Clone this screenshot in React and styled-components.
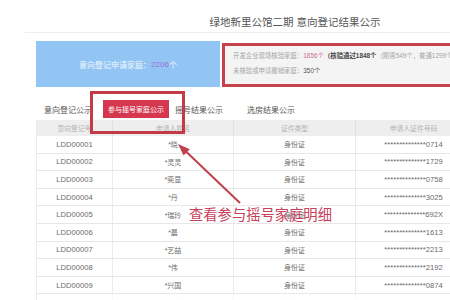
import React from "react";
import styled, { createGlobalStyle } from "styled-components";

const Global = createGlobalStyle`
  html, body { margin: 0; padding: 0; background: #fff; }
  body {
    width: 450px; height: 300px; overflow: hidden;
    font-family: "Liberation Sans", "Noto Sans CJK SC", sans-serif;
  }
`;

const Page = styled.div`
  position: relative;
  width: 450px;
  height: 300px;
  overflow: hidden;
  background: #fff;
`;

const Container = styled.div`
  margin-left: 25px;
  width: 560px;
`;

const Title = styled.h1`
  margin: 0;
  padding: 16px 0 4px;
  font-size: 10.5px;
  line-height: 12px;
  font-weight: normal;
  color: #555;
  text-align: center;
  border-bottom: 1px solid #ededed;
  width: 540px;
`;

const Summary = styled.div`
  display: flex;
  align-items: flex-start;
  gap: 2px;
  margin-top: 8px;
  padding-left: 11px;
`;

const BlueBox = styled.div`
  width: 184px;
  height: 46px;
  background: #92c5f4;
  display: flex;
  align-items: center;
  justify-content: center;
  color: #f4f8ff;
  font-size: 8px;
`;

const Count = styled.span`
  color: ${(p) => p.$color};
  font-weight: ${(p) => (p.$bold ? "bold" : "normal")};
`;

const InfoBox = styled.div`
  box-sizing: border-box;
  margin-top: 2px;
  width: 330px;
  height: 44px;
  border: 3px solid #c5444b;
  background: #f4f4f4;
  padding: 2px 0 0 8px;
  font-size: 6.4px;
  line-height: 15px;
  color: #a5a5a5;
  white-space: nowrap;
  overflow: hidden;
`;

const TabRow = styled.div`
  display: flex;
  align-items: center;
  height: 18px;
  margin-top: 13px;
  padding-left: 19px;
`;

const Tab = styled.div`
  margin-left: ${(p) => p.$gap}px;
  font-size: 8px;
  color: #555;
  white-space: nowrap;
`;

const ActiveTab = styled.div`
  margin-left: ${(p) => p.$gap}px;
  width: 66px;
  height: 18px;
  background: #d5374f;
  color: #fff;
  font-size: 7px;
  display: flex;
  align-items: center;
  justify-content: center;
  white-space: nowrap;
`;

const Table = styled.div`
  margin-top: 2px;
  margin-left: 11px;
  width: 435px;
  border-left: 1px solid #ebebeb;
`;

const cols = "76px 121px 122px 116px";

const HeadRow = styled.div`
  display: grid;
  grid-template-columns: ${cols};
  height: 16px;
  background: #eeeeee;
`;

const HeadCell = styled.div`
  display: flex;
  align-items: center;
  justify-content: center;
  font-size: 6.8px;
  color: #b3b3b3;
  border-right: 1px solid #e0e0e0;
`;

const Row = styled.div`
  display: grid;
  grid-template-columns: ${cols};
  height: 17.6px;
  box-sizing: border-box;
  border-bottom: 1px solid #e7e7e7;
  opacity: ${(p) => (p.$faded ? 0.35 : 1)};
`;

const Cell = styled.div`
  display: flex;
  align-items: center;
  justify-content: center;
  font-size: ${(p) => (p.$cjk ? 7 : 7.6)}px;
  color: #6a6a6a;
  border-right: 1px solid #ececec;
  white-space: nowrap;
`;

const Highlight = styled.div`
  position: absolute;
  left: 90px;
  top: 91px;
  width: 95px;
  height: 43px;
  box-sizing: border-box;
  border: 3px solid #c23b45;
`;

const Overlay = styled.svg`
  position: absolute;
  left: 0;
  top: 0;
  pointer-events: none;
`;

const Callout = styled.div`
  position: absolute;
  left: 189px;
  top: 205px;
  font-family: "Noto Sans CJK SC", sans-serif;
  font-size: 14.3px;
  line-height: 17px;
  color: #c8405a;
  white-space: nowrap;
`;

const rows = [
  ["LDD00001", "*晓", "0714"],
  ["LDD00002", "*灵灵", "1729"],
  ["LDD00003", "*奕显", "0758"],
  ["LDD00004", "*丹", "3025"],
  ["LDD00005", "*瑞玲", "692X"],
  ["LDD00006", "*晨", "1613"],
  ["LDD00007", "*艺喆", "2213"],
  ["LDD00008", "*伟", "2192"],
  ["LDD00009", "*兴国", "0874"],
  ["LDD00010", "*明杰", "0625"],
];

export default function App() {
  return (
    <Page>
      <Global />
      <Container>
        <Title>绿地新里公馆二期 意向登记结果公示</Title>
        <Summary>
          <BlueBox>
            意向登记申请家庭：<Count $color="#9a70cf">2206</Count>个
          </BlueBox>
          <InfoBox>
            <div>
              开发企业现场核验家庭：<Count $color="#cf6f8c">1856个</Count>
              <Count $color="#444" $bold>（核验通过1848个</Count>（刚需549个，普通1299个））
            </div>
            <div>
              未核验或申请撤销家庭：<Count $color="#555">350个</Count>
            </div>
          </InfoBox>
        </Summary>
        <TabRow>
          <Tab $gap={0}>意向登记公示</Tab>
          <ActiveTab $gap={11}>参与摇号家庭公示</ActiveTab>
          <Tab $gap={6}>摇号结果公示</Tab>
          <Tab $gap={24}>选房结果公示</Tab>
        </TabRow>
        <Table>
          <HeadRow>
            <HeadCell>意向登记号</HeadCell>
            <HeadCell>申请人姓名</HeadCell>
            <HeadCell>证件类型</HeadCell>
            <HeadCell>申请人证件号码</HeadCell>
          </HeadRow>
          {rows.map(([id, name, tail], i) => (
            <Row key={id} $faded={i === 9}>
              <Cell>{id}</Cell>
              <Cell $cjk>{name}</Cell>
              <Cell $cjk>身份证</Cell>
              <Cell>{"**************" + tail}</Cell>
            </Row>
          ))}
        </Table>
      </Container>
      <Highlight />
      <Overlay width="450" height="300" viewBox="0 0 450 300">
        <line x1="186.5" y1="152" x2="240" y2="203" stroke="#c0404e" strokeWidth="2" />
        <polygon points="178,144 183.6,155.4 189.8,149.2" fill="#c0404e" />
      </Overlay>
      <Callout>查看参与摇号家庭明细</Callout>
    </Page>
  );
}
